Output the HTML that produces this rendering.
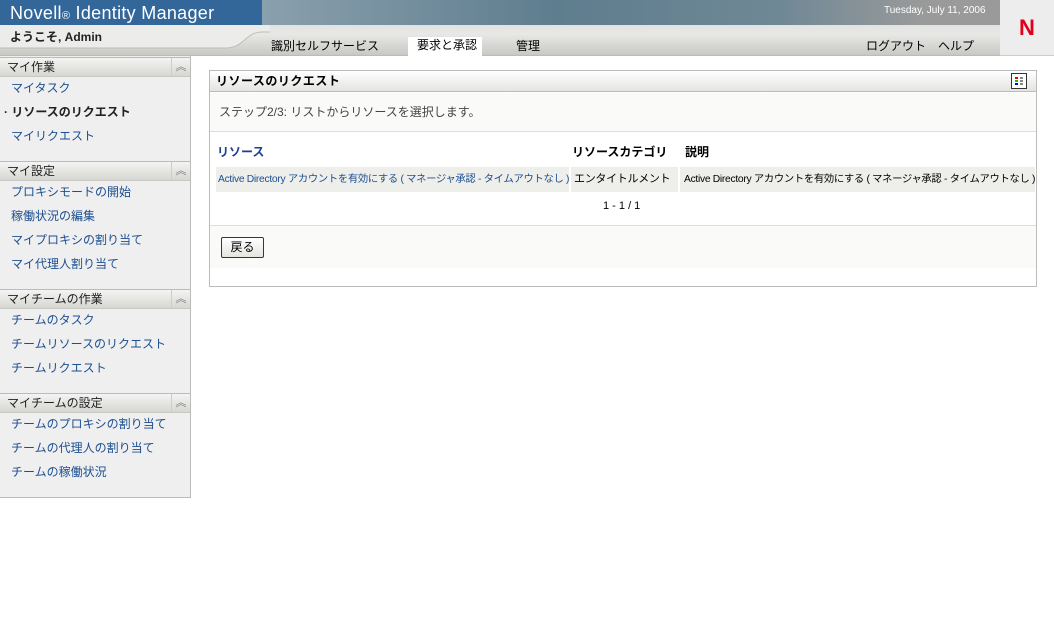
<!DOCTYPE html>
<html><head><meta charset="utf-8"><style>
*{margin:0;padding:0;box-sizing:border-box}
body{width:1054px;height:627px;background:#fff;font-family:"Liberation Sans","Noto Sans CJK JP",sans-serif;font-size:12px;line-height:14px;position:relative;overflow:hidden;color:#000}
.a{position:absolute}
.sh{position:absolute;left:0;width:190px;height:20px;background:linear-gradient(#f4f4f2,#d6d6d2);border-top:1px solid #bbb;border-bottom:1px solid #c8c8c4;font-size:12px;color:#222;padding:2px 0 0 7px;line-height:14px}
.sh i{position:absolute;right:0;top:0;width:19px;height:18px;border-left:1px solid #ccc;font-style:normal;text-align:center;color:#777;font-size:11px;line-height:18px}
.it{position:absolute;left:11px;font-size:12px;color:#1d4f91}
</style></head><body>
<div class="a" style="left:0;top:0;width:262px;height:25px;background:#336699;color:#fff;font-size:18px;line-height:22px;padding:2px 0 0 10px;letter-spacing:0.3px">Novell<span style="font-size:11px">®</span> Identity Manager</div>
<div class="a" style="left:262px;top:0;width:738px;height:25px;background:linear-gradient(90deg,#8aa0ae,#5e7d8e 40%,#6f8896 70%,#9a9a9a 90%,#9a9a9a)"></div>
<div class="a" style="left:884px;top:4px;color:#fff;font-size:10px">Tuesday, July 11, 2006</div>
<div class="a" style="left:1000px;top:0;width:54px;height:56px;background:#ededed;border-bottom:1px solid #ccc;color:#e0001a;font-weight:bold;font-size:22px;line-height:24px;text-align:center;padding-top:16px">N</div>
<div class="a" style="left:0;top:25px;width:1000px;height:31px;background:linear-gradient(#e2e2e0,#e8e8e6 30%,#c8c8c4);border-bottom:1px solid #bbb"></div>
<svg class="a" style="left:0;top:25px" width="270" height="31"><path d="M0 0H270V7H262C245 7 245 23 225 23H0Z" fill="#ececea"/><path d="M0 23H225C245 23 245 7 262 7H270" fill="none" stroke="#bdbdb8"/></svg>
<div class="a" style="left:10px;top:30px;font-size:12px;font-weight:bold;color:#222">ようこそ, Admin</div>
<div class="a" style="left:271px;top:39px;font-size:12px">識別セルフサービス</div>
<div class="a" style="left:408px;top:37px;width:74px;height:20px;background:#fff;padding:1px 0 0 9px">要求と承認</div>
<div class="a" style="left:516px;top:39px">管理</div>
<div class="a" style="left:866px;top:39px">ログアウト</div>
<div class="a" style="left:938px;top:39px">ヘルプ</div>

<div class="a" style="left:0;top:56px;width:191px;height:442px;background:#efefef;border-right:1px solid #bbb;border-bottom:1px solid #bbb"></div>
<div class="sh" style="top:57px">マイ作業<i>︽</i></div>
<div class="it" style="top:81px">マイタスク</div>
<div class="a" style="left:4px;top:105px;font-weight:bold;color:#222">· リソースのリクエスト</div>
<div class="it" style="top:129px">マイリクエスト</div>
<div class="sh" style="top:161px">マイ設定<i>︽</i></div>
<div class="it" style="top:185px">プロキシモードの開始</div>
<div class="it" style="top:209px">稼働状況の編集</div>
<div class="it" style="top:233px">マイプロキシの割り当て</div>
<div class="it" style="top:257px">マイ代理人割り当て</div>
<div class="sh" style="top:289px">マイチームの作業<i>︽</i></div>
<div class="it" style="top:313px">チームのタスク</div>
<div class="it" style="top:337px">チームリソースのリクエスト</div>
<div class="it" style="top:361px">チームリクエスト</div>
<div class="sh" style="top:393px">マイチームの設定<i>︽</i></div>
<div class="it" style="top:417px">チームのプロキシの割り当て</div>
<div class="it" style="top:441px">チームの代理人の割り当て</div>
<div class="it" style="top:465px">チームの稼働状況</div>

<div class="a" style="left:209px;top:70px;width:828px;height:217px;border:1px solid #bbb;background:#fff">
 <div class="a" style="left:0;top:0;width:826px;height:21px;background:linear-gradient(#fff,#e4e4e2);border-bottom:1px solid #bbb;font-weight:bold;font-size:12px;padding:3px 0 0 6px;letter-spacing:.5px">リソースのリクエスト</div>
 <div class="a" style="left:801px;top:2px;width:16px;height:16px;border:1px solid #333;background:#fff">
  <svg width="14" height="14"><rect x="3" y="3" width="3" height="2" fill="#e00"/><rect x="3" y="6" width="3" height="2" fill="#0c0"/><rect x="3" y="9" width="3" height="2" fill="#00e"/><rect x="8" y="3" width="3" height="2" fill="#888"/><rect x="8" y="6" width="3" height="2" fill="#888"/><rect x="8" y="9" width="3" height="2" fill="#888"/></svg></div>
 <div class="a" style="left:0;top:22px;width:826px;height:39px;background:#fafaf8;border-bottom:1px solid #ddd;color:#444;padding:12px 0 0 9px">ステップ2/3: リストからリソースを選択します。</div>
 <div class="a" style="left:7px;top:74px;font-weight:bold;color:#1d3f91">リソース</div>
 <div class="a" style="left:362px;top:74px;font-weight:bold">リソースカテゴリ</div>
 <div class="a" style="left:475px;top:74px;font-weight:bold">説明</div>
 <div class="a" style="left:6px;top:96px;width:819px;height:25px;background:#eeeeea"></div>
 <div class="a" style="left:359px;top:96px;width:2px;height:25px;background:#fff"></div>
 <div class="a" style="left:468px;top:96px;width:2px;height:25px;background:#fff"></div>
 <div class="a" style="left:8px;top:102px;font-size:10.3px;color:#1d4f91;letter-spacing:-.3px">Active Directory アカウントを有効にする ( マネージャ承認 - タイムアウトなし )</div>
 <div class="a" style="left:364px;top:101px;font-size:11px;letter-spacing:-.3px">エンタイトルメント</div>
 <div class="a" style="left:474px;top:102px;font-size:10.3px;letter-spacing:-.3px">Active Directory アカウントを有効にする ( マネージャ承認 - タイムアウトなし )</div>
 <div class="a" style="left:393px;top:128px;font-size:11px">1 - 1 / 1</div>
 <div class="a" style="left:0;top:154px;width:826px;height:43px;background:#fafaf8;border-top:1px solid #ddd"></div>
 <div class="a" style="left:11px;top:166px;width:43px;height:21px;border:1px solid #335;border-radius:2px;background:linear-gradient(#fff,#e4e4e0);font-size:12px;text-align:center;padding-top:2px">戻る</div>
</div>
</body></html>
